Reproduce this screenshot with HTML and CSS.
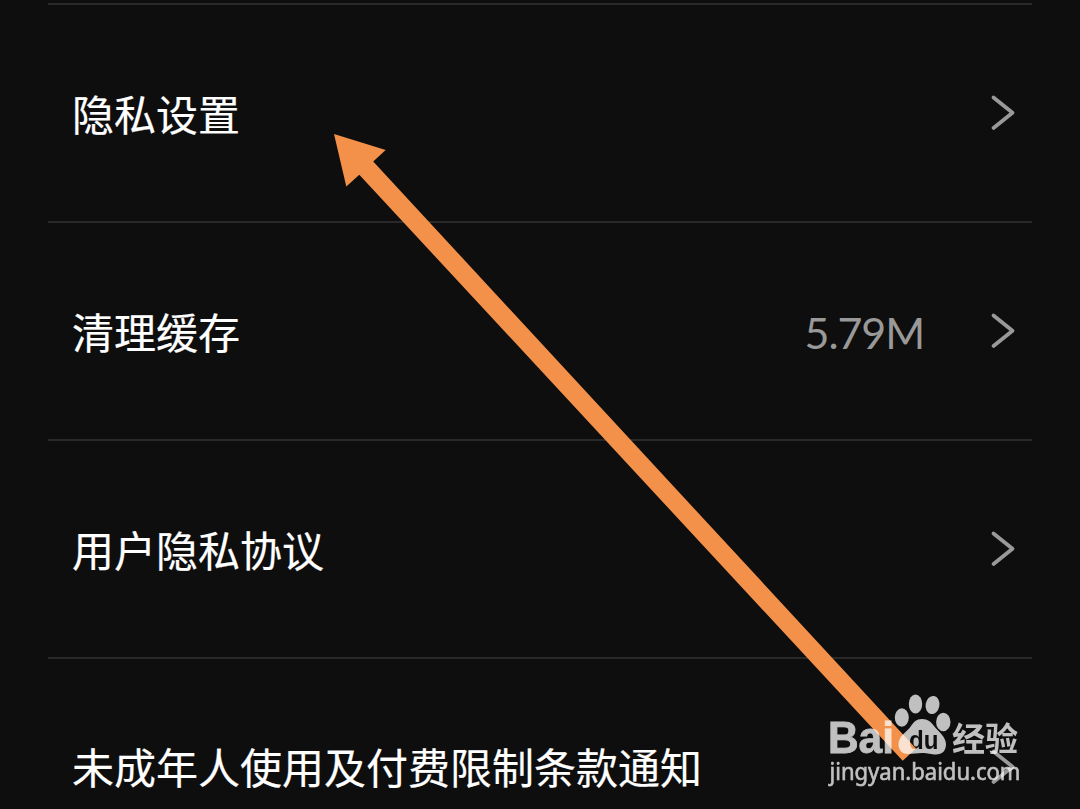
FILE: index.html
```html
<!DOCTYPE html>
<html lang="zh-CN">
<head>
    <meta charset="UTF-8">
    <meta name="viewport" content="width=device-width, initial-scale=1.0">
    <title>设置</title>
    <link rel="stylesheet" href="styles.css">
</head>
<body>

    <!-- Settings List -->
    <div class="settings">
        <div class="row">
            <span class="label">隐私设置</span>
            <svg class="chevron" viewBox="0 0 26 38"><path d="M3.500 3.500L22.500 18.700L3.500 33.900"/></svg>
        </div>
        <div class="row">
            <span class="label">清理缓存</span>
            <span class="value">5.79M</span>
            <svg class="chevron" viewBox="0 0 26 38"><path d="M3.500 3.500L22.500 18.700L3.500 33.900"/></svg>
        </div>
        <div class="row">
            <span class="label">用户隐私协议</span>
            <svg class="chevron" viewBox="0 0 26 38"><path d="M3.500 3.500L22.500 18.700L3.500 33.900"/></svg>
        </div>
        <div class="row last">
            <span class="label">未成年人使用及付费限制条款通知</span>
            <svg class="chevron" viewBox="0 0 26 38"><path d="M3.500 3.500L22.500 18.700L3.500 33.900"/></svg>
        </div>
    </div>

    <!-- Pointer Arrow -->
    <svg class="arrow" viewBox="0 0 1080 809">
        <polygon points="334,134 385.7,150 373.2,161.5 916,748.5 902.7,760.8 359.3,174.7 346.3,186.5"/>
    </svg>

    <!-- Watermark -->
    <svg class="watermark" viewBox="820 685 210 110">
        <mask id="du" maskUnits="userSpaceOnUse" x="820" y="685" width="210" height="110">
            <rect x="820" y="685" width="210" height="110" fill="#fff"/>
            <text class="du" x="909" y="748.5" textLength="29.500" lengthAdjust="spacingAndGlyphs">du</text>
        </mask>
        <text class="brand" x="828" y="752.500" textLength="66" lengthAdjust="spacingAndGlyphs">Bai</text>
        <g mask="url(#du)">
            <ellipse cx="901.8" cy="717.5" rx="7" ry="9.3"/>
            <ellipse cx="915.5" cy="704" rx="6.7" ry="9.4"/>
            <ellipse cx="932.5" cy="705" rx="6.9" ry="9.1" transform="rotate(10 932.5 705)"/>
            <ellipse cx="943.3" cy="722" rx="7.2" ry="9.2"/>
            <path d="M922 719C928 719 931 722 934 726C938 731 946 737 946 744C946 751 942 754.500 936 754.500C931 754.500 928 753 922 753C917 753 913 754 908 754C902 754 898.500 750 898.500 744C898.500 736 907 732 911 726C914 722 916 719 922 719Z"/>
        </g>
        <text class="name" x="952" y="750.5" textLength="66" lengthAdjust="spacingAndGlyphs">经验</text>
        <text class="site" x="829.5" y="779.500" textLength="191" lengthAdjust="spacingAndGlyphs">jingyan.baidu.com</text>
    </svg>

</body>
</html>
```

FILE: styles.css
```css
/* General Styles */
body { font-family: "Noto Sans CJK SC", sans-serif; background-color: #0e0e0e; color: #fff; margin: 0; height: 809px; overflow: hidden; position: relative; }

/* Settings List */
.settings { padding: 3px 48px 0; }
.row { height: 218px; box-sizing: border-box; border-top: 2px solid #292929; padding: 0 16px 0 24px; display: flex; align-items: center; }
.row.last { height: 152px; align-items: flex-start; padding-top: 77px; }
.row.last .chevron { margin-top: 12px; }
.label { flex: 1; font-size: 42px; line-height: 60px; margin-bottom: 1px; white-space: nowrap; -webkit-text-stroke: 0.2px #fff; }
.value { font-family: Lato, sans-serif; font-size: 43px; line-height: 60px; color: #999; letter-spacing: -1.1px; margin: 4px 66px 0 0; }
.chevron { width: 26px; height: 38px; flex: none; fill: none; stroke: #999; stroke-width: 3.8; stroke-linecap: round; stroke-linejoin: round; }

/* Pointer Arrow */
.arrow { position: absolute; left: 0; top: 0; width: 1080px; height: 809px; fill: #f3914a; }

/* Watermark */
.watermark { position: absolute; left: 820px; top: 685px; width: 210px; height: 110px; fill: #fff; opacity: 0.74; }
.brand { font-family: "Liberation Sans", sans-serif; font-size: 44px; font-weight: bold; stroke: #fff; stroke-width: 0.8; }
.du { font-family: "Liberation Sans", sans-serif; font-size: 26px; font-weight: bold; fill: #000; }
.name { font-family: "Noto Sans CJK SC", sans-serif; font-size: 33px; font-weight: bold; }
.site { font-family: "Noto Sans", sans-serif; font-size: 24px; stroke: #fff; stroke-width: 0.6; }
```
